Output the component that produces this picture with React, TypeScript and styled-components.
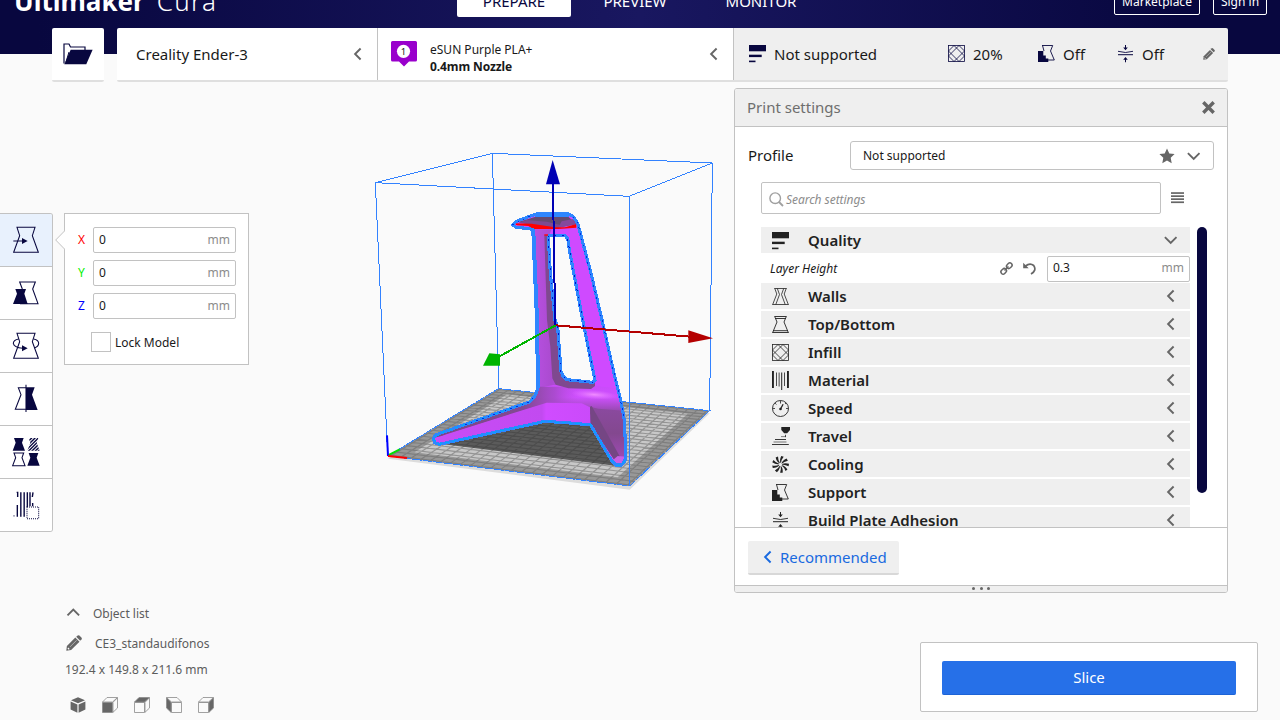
import React from 'react';
import styled, { createGlobalStyle } from 'styled-components';

const NAVY = '#08073f';
const LINE = '#c2c2c2';
const INK = '#191919';
const GREY = '#666666';

const GlobalStyle = createGlobalStyle`
  * { box-sizing: border-box; }
  body {
    margin: 0;
    background: #fafafa;
    font-family: "Noto Sans", "Open Sans", sans-serif;
    color: ${INK};
    overflow: hidden;
  }
`;

/* ---------- layout ---------- */

const Window = styled.div`
  display: flex;
  flex-direction: column;
  width: 1280px;
  height: 720px;
  overflow: hidden;
  background: #fafafa;
`;

const Header = styled.header`
  display: grid;
  grid-template-columns: 457px 1fr auto;
  align-items: start;
  height: 54px;
  flex: none;
  overflow: hidden;
  padding-right: 13px;
  background: linear-gradient(90deg, ${NAVY} 0%, ${NAVY} 3%, #191760 50%, ${NAVY} 92%, ${NAVY} 100%);
`;

const Logo = styled.div`
  margin: -14px 0 0 14px;
  line-height: 30px;
  font-size: 26px;
  font-weight: 700;
  color: #fff;
  white-space: nowrap;
`;

const LogoLight = styled.span`
  font-weight: 300;
  margin-left: 4px;
  letter-spacing: 1.3px;
`;

const Tabs = styled.nav`
  display: flex;
  gap: 13px;
  margin-top: -13px;
`;

const Tab = styled.div<{ $active?: boolean; $width: number }>`
  width: ${(p) => p.$width}px;
  height: 30px;
  line-height: 28px;
  text-align: center;
  font-size: 15px;
  border-radius: 2px;
  color: ${(p) => (p.$active ? NAVY : '#fff')};
  background: ${(p) => (p.$active ? '#fff' : 'transparent')};
`;

const HeaderButtons = styled.div`
  display: flex;
  gap: 13px;
  margin-top: -12px;
`;

const HeaderButton = styled.div<{ $width: number }>`
  width: ${(p) => p.$width}px;
  height: 27px;
  line-height: 26px;
  border: 1px solid #fff;
  border-radius: 2px;
  font-size: 12px;
  text-align: center;
  color: #fff;
`;

const StageMenu = styled.div`
  display: flex;
  flex: none;
  height: 54px;
  margin: -26px 52px 0;
  z-index: 1;
`;

const OpenFile = styled.div`
  display: flex;
  align-items: center;
  justify-content: center;
  width: 52px;
  margin-right: 13px;
  background: #fff;
  border-bottom: 2px solid #dfdfdf;
  border-radius: 2px;
`;

const StageCell = styled.div<{ $width: number; $muted?: boolean; $pad: number; $first?: boolean }>`
  display: flex;
  align-items: center;
  width: ${(p) => p.$width}px;
  padding: 0 ${(p) => (p.$muted ? 13 : 12)}px 0 ${(p) => p.$pad}px;
  background: ${(p) => (p.$muted ? '#efefef' : '#fff')};
  border-bottom: 2px solid #dfdfdf;
  box-shadow: ${(p) => (p.$first ? 'none' : `inset 1px 0 0 ${LINE}`)};
  border-radius: ${(p) => (p.$first ? '2px 0 0 2px' : p.$muted ? '0 2px 2px 0' : '0')};
  font-size: 15px;
`;

const Grow = styled.div`
  flex: 1;
`;

const MaterialText = styled.div`
  flex: 1;
  margin-left: 13px;
  font-size: 12px;
  line-height: 17px;
  padding-top: 8px;
`;

const Strong = styled.div`
  font-weight: 700;
  letter-spacing: -0.1px;
`;

const Summary = styled.div<{ $width: number; $gap: number }>`
  display: flex;
  align-items: center;
  gap: ${(p) => p.$gap}px;
  width: ${(p) => p.$width}px;
  font-size: 15px;
`;

const Body = styled.main`
  display: grid;
  flex: 1;
  min-height: 0;
`;

const SceneLayer = styled.div`
  grid-area: 1 / 1;
  padding: 58px 0 0 365px;
  height: 0;
`;

const Overlay = styled.div`
  grid-area: 1 / 1;
  display: flex;
  flex-direction: column;
  z-index: 1;
`;

const UpperRow = styled.div`
  display: flex;
  align-items: flex-start;
  height: 511px;
  padding-right: 52px;
`;

const LowerRow = styled.div`
  display: flex;
  flex: 1;
  justify-content: space-between;
`;

/* ---------- tools ---------- */

const Toolbar = styled.div`
  width: 53px;
  margin-top: 131px;
  border: 1px solid ${LINE};
  border-left: 0;
  border-radius: 0 3px 3px 0;
  overflow: hidden;
  background: #fff;
`;

const ToolButton = styled.div<{ $active?: boolean }>`
  height: 53px;
  background: ${(p) => (p.$active ? '#e8f1fd' : '#fff')};
  border-bottom: 1px solid ${LINE};
  &:last-child { height: 52px; border-bottom: 0; }
  svg { display: block; }
`;

const ToolPointer = styled.svg`
  margin: 148px -1px 0 2px;
  flex: none;
  z-index: 1;
`;

const ToolPanel = styled.div`
  width: 185px;
  height: 152px;
  margin-top: 131px;
  padding: 13px 12px 0 12px;
  background: #fff;
  border: 1px solid ${LINE};
`;

const AxisRow = styled.label`
  display: flex;
  align-items: center;
  margin-bottom: 7px;
`;

const AxisName = styled.span<{ $color: string }>`
  width: 16px;
  padding: 0 0 2px 1px;
  font-size: 12px;
  text-align: left;
  color: ${(p) => p.$color};
`;

const Field = styled.div<{ $width: number }>`
  display: flex;
  align-items: center;
  justify-content: space-between;
  width: ${(p) => p.$width}px;
  height: 26px;
  padding: 0 5px 2px;
  border: 1px solid ${LINE};
  border-radius: 2px;
  background: #fff;
  font-size: 12px;
`;

const Unit = styled.span`
  color: #8c8c8c;
`;

const LockRow = styled.div`
  display: flex;
  align-items: center;
  gap: 4px;
  margin: 13px 0 0 14px;
  font-size: 12px;
`;

const Checkbox = styled.div`
  width: 20px;
  height: 20px;
  border: 1px solid ${LINE};
  background: #fff;
`;

/* ---------- settings panel ---------- */

const Settings = styled.section`
  display: flex;
  flex-direction: column;
  width: 494px;
  height: 505px;
  margin: 6px 0 0 auto;
  background: #fff;
  border: 1px solid ${LINE};
  border-radius: 3px;
  overflow: hidden;
`;

const SettingsTitle = styled.div`
  display: flex;
  align-items: center;
  justify-content: space-between;
  height: 38px;
  padding: 0 11px 1px 12px;
  background: #efefef;
  border-bottom: 1px solid ${LINE};
  font-size: 15px;
  color: #6e6e6e;
`;

const ProfileRow = styled.div`
  display: flex;
  align-items: center;
  justify-content: space-between;
  margin-top: 14px;
  padding: 0 13px;
  font-size: 15px;
`;

const ProfileLabel = styled.span`
  padding-bottom: 2px;
`;

const Combo = styled.div`
  display: flex;
  align-items: center;
  gap: 12px;
  width: 364px;
  height: 29px;
  padding: 0 12px 0 12px;
  border: 1px solid ${LINE};
  border-radius: 3px;
  font-size: 12px;
`;

const SearchRow = styled.div`
  display: flex;
  align-items: center;
  gap: 10px;
  margin: 12px 0 13px 26px;
`;

const SearchBox = styled.div`
  display: flex;
  align-items: center;
  gap: 2px;
  width: 400px;
  height: 32px;
  padding: 2px 0 0 7px;
  border: 1px solid ${LINE};
  border-radius: 2px;
  font-size: 12px;
  font-style: italic;
  letter-spacing: -0.05px;
  color: #8c8c8c;
`;

const ListArea = styled.div`
  display: flex;
  gap: 7px;
  flex: 1;
  min-height: 0;
  padding-left: 26px;
  overflow: hidden;
`;

const List = styled.div`
  width: 429px;
`;

const ScrollThumb = styled.div`
  width: 10px;
  height: 266px;
  border-radius: 5px;
  background: ${NAVY};
`;

const Category = styled.div`
  display: flex;
  align-items: center;
  height: 26px;
  margin-bottom: 2px;
  padding: 0 12px 0 11px;
  background: #efefef;
  font-size: 15px;
  font-weight: 600;
  color: #222;
  & > svg:first-child { margin-top: 2px; }
`;

const CategoryName = styled.span`
  flex: 1;
  margin-left: 18px;
`;

const SettingRow = styled.div`
  display: flex;
  align-items: center;
  height: 28px;
  padding: 0 0 1px 9px;
  font-size: 12px;
  font-style: italic;
  & > svg { margin-right: 10px; }
  & > svg + svg { margin-right: 11px; }
`;

const Upright = styled.span`
  font-style: normal;
`;

const SettingsFooter = styled.div`
  height: 58px;
  padding: 13px;
  border-top: 1px solid ${LINE};
`;

const Recommended = styled.div`
  display: flex;
  align-items: center;
  gap: 5px;
  width: 151px;
  height: 34px;
  padding-left: 13px;
  border-bottom: 2px solid #d8d8d8;
  border-radius: 2px;
  background: #efefef;
  font-size: 15px;
  color: #196ae0;
`;

const DragHandle = styled.div`
  display: flex;
  align-items: flex-start;
  justify-content: center;
  gap: 4.5px;
  height: 7px;
  padding-top: 1px;
  border-top: 1px solid ${LINE};
  background: #efefef;
`;

const Dot = styled.i`
  width: 3px;
  height: 3px;
  border-radius: 50%;
  background: ${GREY};
`;

/* ---------- lower row ---------- */

const ObjectInfo = styled.div`
  display: flex;
  flex-direction: column;
  padding: 11px 0 0 65px;
  font-size: 12px;
  color: #5c5c5c;
`;

const InfoRow = styled.div<{ $height: number; $gap: number; $indent?: number }>`
  display: flex;
  align-items: center;
  height: ${(p) => p.$height}px;
  gap: ${(p) => p.$gap}px;
  padding-left: ${(p) => p.$indent ?? 0}px;
`;

const Views = styled.div`
  display: flex;
  gap: 16px;
  margin: 23px 0 0 5px;
`;

const ActionPanel = styled.div`
  width: 338px;
  height: 70px;
  margin: 49px 22px 0 0;
  padding: 18px 21px;
  border: 1px solid ${LINE};
  border-radius: 2px;
  background: #fff;
`;

const SliceButton = styled.div`
  height: 34px;
  line-height: 33px;
  border-radius: 2px;
  background: #2670e8;
  border-bottom: 1px solid #1d63d6;
  color: #fff;
  font-size: 15px;
  text-align: center;
`;

/* ---------- icons ---------- */

type ChevronDir = 'left' | 'down' | 'up';
const chevrons: Record<ChevronDir, string> = {
  left: 'M9.600 1.500 L4.100 7 L9.600 12.500',
  down: 'M.900 4.200 L6.700 10 L12.500 4.200',
  up: 'M1.500 9.300 L7.300 3.500 L13.100 9.300',
};

const Chevron = ({ dir, color = GREY }: { dir: ChevronDir; color?: string }) => (
  <svg width="14" height="14" viewBox="0 0 14 14" fill="none" stroke={color} strokeWidth="1.900">
    <path d={chevrons[dir]} />
  </svg>
);

const FolderIcon = () => (
  <svg width="30" height="22" viewBox="0 0 30 22">
    <path d="M1 20.500 V1 H6 L7.500 4 H22 V7.500" fill="none" stroke={NAVY} strokeWidth="1.200" />
    <path d="M3 19 L6 9" fill="none" stroke={NAVY} strokeWidth="1" />
    <path d="M7.700 6.700 H29.600 L23.300 21.300 H1.300 Z" fill={NAVY} />
  </svg>
);

const MaterialBadge = () => (
  <svg width="26" height="26" viewBox="0 0 26 26">
    <path d="M1.500 0 H24.500 Q26 0 26 1.500 V19 Q26 20.500 24.500 20.500 H18 L13 25.500 L8 20.500 H1.500 Q0 20.500 0 19 V1.500 Q0 0 1.500 0Z" fill="#9900cc" />
    <circle cx="12.500" cy="10.300" r="6.600" fill="#fff" />
    <text x="12.500" y="13.800" fontSize="9.500" textAnchor="middle" fill={INK}>1</text>
  </svg>
);

type GlyphName =
  | 'quality' | 'walls' | 'topbottom' | 'infill' | 'material'
  | 'speed' | 'travel' | 'cooling' | 'support' | 'adhesion';

const glyphs: Record<GlyphName, (c: string) => React.ReactNode> = {
  quality: (c) => (
    <g fill={c}>
      <rect x="0" y="0" width="17" height="6.300" />
      <rect x="0" y="9.700" width="12.700" height="2.400" />
      <rect x="0" y="15.600" width="6.500" height="1.600" />
    </g>
  ),
  walls: (c) => (
    <g fill="none" stroke={c} strokeWidth=".8">
      <path d="M2.300 .500 H14.700 M.300 16.500 H16.700" />
      <path d="M2.800 .500 L4.800 6 L.700 16.500 M5.300 .500 L7.500 6.500 L3.800 16.500 M14.200 .500 L12.200 6 L16.300 16.500 M11.700 .500 L9.500 6.500 L13.200 16.500" />
    </g>
  ),
  topbottom: (c) => (
    <g fill="none" stroke={c} strokeWidth=".9">
      <path d="M2.500 .500 H14.500 M3 2.500 H14 M1 14.700 H16 M.300 16.500 H16.700" />
      <path d="M2.700 .500 L5 6 L.700 16.500 M14.300 .500 L12 6 L16.300 16.500" />
    </g>
  ),
  infill: (c) => (
    <g fill="none" stroke={c} strokeWidth=".8">
      <rect x=".500" y=".500" width="16" height="16" />
      <path d="M.500 6 L6 .500 M.500 11 L11 .500 M6 16.500 L16.500 6 M11 16.500 L16.500 11 M.500 6 L11 16.500 M.500 11 L6 16.500 M6 .500 L16.500 11 M11 .500 L16.500 6" />
    </g>
  ),
  material: (c) => (
    <g fill={c}>
      <rect x="0" y="-1" width="1.900" height="17" />
      <rect x="15" y="-1" width="1.900" height="17" />
      <rect x="4" y=".500" width=".8" height="13.500" />
      <rect x="6.700" y=".500" width=".8" height="14" />
      <rect x="9.200" y=".500" width="1" height="17.500" />
      <rect x="12" y=".500" width=".8" height="13.500" />
    </g>
  ),
  speed: (c) => (
    <g fill="none" stroke={c} strokeWidth=".9">
      <circle cx="8.500" cy="8.500" r="8" />
      <path d="M8.500 .500 V3.500 M.500 8.500 H3 M14 8.500 H16.500 M2.900 3 L4.500 4.500 M14.100 3 L13 4" strokeWidth=".8" />
      <circle cx="8.500" cy="9" r="1.300" fill={c} stroke="none" />
      <path d="M8.500 9 L11.100 4.300" strokeWidth="1.300" />
    </g>
  ),
  travel: (c) => (
    <g fill={c}>
      <path d="M9.300 -1 H18 V2 L15.200 5.300 H12.200 L9.300 2Z" />
      <rect x="9" y="8.200" width="5" height=".9" opacity=".6" />
      <rect x="13" y="6.800" width="1" height="2.300" opacity=".8" />
      <rect x="3" y="11" width="11" height=".9" />
      <rect x="1.500" y="13.500" width="13" height="1" opacity=".6" />
      <rect x="0" y="16" width="16.800" height=".9" />
    </g>
  ),
  cooling: (c) => (
    <g fill={c}>
      {[0, 1, 2, 3, 4, 5, 6, 7, 8].map((i) => (
        <path key={i} transform={`rotate(${i * 40 + 10} 8.500 8.500)`} d="M8.300 7 Q6.500 4.500 7.800 0 L10.300 .400 Q8.300 4 8.700 7Z" />
      ))}
    </g>
  ),
  support: (c) => (
    <g>
      <path d="M4 .500 H14.700 L12.500 6 L16.300 15 H10 M4.500 .500 L6 6" fill="none" stroke={c} strokeWidth=".9" />
      <path d="M0 6 H5.300 V10.500 H7.800 V13.500 H10.300 V17 H0Z" fill={c} />
    </g>
  ),
  adhesion: (c) => (
    <g fill={c} stroke={c} strokeWidth="0">
      <path d="M1 6.300 Q8.500 8.700 16 6.300" fill="none" strokeWidth=".9" />
      <rect x="1" y="9.200" width="15" height="1" />
      <path d="M8 0 H9 V2.500 H10.800 L8.500 5.300 L6.200 2.500 H8Z" />
      <path d="M8 17.200 H9 V14.700 H10.800 L8.500 11.900 L6.200 14.700 H8Z" />
    </g>
  ),
};

const Glyph = ({ name, color = '#222' }: { name: GlyphName; color?: string }) => (
  <svg width="18" height="18" viewBox="0 0 18 18" overflow="visible">{glyphs[name](color)}</svg>
);

const Pencil = ({ size }: { size: number }) => (
  <svg width={size} height={size} viewBox="0 0 16 16" fill={GREY}>
    <path d="M.3 15.700 L.9 10.900 L9.300 2.500 L13.500 6.700 L5.100 15.100 Z" />
    <path d="M10.200 1.700 L11.700 .4 Q12.500 -.2 13.400 .6 L15.400 2.600 Q16.200 3.500 15.600 4.300 L14.200 5.700 Z" />
    <path d="M4 11.900 L10.600 5.300" stroke="#ddd" strokeWidth=".6" />
    <path d="M1.900 13 L3.200 14.300" stroke="#fff" strokeWidth="1.200" />
  </svg>
);

const CloseIcon = () => (
  <svg width="14" height="13" viewBox="0 0 14 13" stroke={GREY} strokeWidth="3.400">
    <path d="M1.300 1.300 L11.700 11.700 M11.700 1.300 L1.300 11.700" />
  </svg>
);

const Star = () => (
  <svg width="16" height="16" viewBox="0 0 16 15" fill={GREY}>
    <path d="M8 .1 L10.300 4.900 L15.600 5.500 L11.700 9.200 L12.700 14.700 L8 12.100 L3.300 14.700 L4.300 9.200 L.4 5.500 L5.700 4.900 Z" />
  </svg>
);

const SearchIcon = () => (
  <svg width="15" height="15" viewBox="0 0 15 15" fill="none" stroke="#a0a0a0">
    <circle cx="6.200" cy="6.200" r="5.300" strokeWidth="1.400" />
    <path d="M10 10 L14 14" strokeWidth="1.800" />
  </svg>
);

const Hamburger = () => (
  <svg width="13" height="12" viewBox="0 0 13 12" fill={GREY}>
    <rect width="13" height="1.700" y=".2" />
    <rect width="13" height="1.700" y="3.300" />
    <rect width="13" height="1.700" y="6.300" />
    <rect width="13" height="1.700" y="9.400" />
  </svg>
);

const LinkIcon = () => (
  <svg width="13" height="13" viewBox="0 0 13 13" fill="none" stroke={GREY} strokeWidth="1.500">
    <rect x="-3" y="-2.200" width="6" height="4.400" rx="2.200" transform="translate(3.700 9.300) rotate(-45)" />
    <rect x="-3" y="-2.200" width="6" height="4.400" rx="2.200" transform="translate(9.300 3.700) rotate(-45)" />
    <path d="M4.500 8.500 L8.500 4.500" />
  </svg>
);

const ResetIcon = () => (
  <svg width="13" height="13" viewBox="0 0 13 13">
    <path d="M2.500 4 Q7 .300 10.700 3.500 Q14 8.500 8 12" fill="none" stroke={GREY} strokeWidth="1.700" />
    <path d="M.2 .800 V6.300 H5.700Z" fill={GREY} />
  </svg>
);

type ToolName = 'move' | 'scale' | 'rotate' | 'mirror' | 'perModel' | 'blocker';

const TOOL_BODY = 'M51 40 H105 L97 65 L115 115 H41 L59 65 Z';
const MINI = 'M4 0 H33 L28 14 L37 38 H0 L9 14 Z';

const toolShapes: Record<ToolName, React.ReactNode> = {
  move: (
    <>
      <path d={TOOL_BODY} />
      <path d="M40 81 H68" />
      <path d="M66 72 L83 81 L66 90Z" fill={NAVY} stroke="none" />
    </>
  ),
  scale: (
    <>
      <path d="M67 66 L59 45 H106 L98 66 L114 110 H60" />
      <path d="M46 66 H78 L73 80 L83 111 H39 L51 80Z" fill={NAVY} stroke="none" />
    </>
  ),
  rotate: (
    <>
      <path d={TOOL_BODY} />
      <path d="M56 57 Q40 60 40 70 Q42 82 68 85 M101 57 Q116 60 116 70 Q116 80 103 84" />
      <path d="M66 76 L83 85 L66 94Z" fill={NAVY} stroke="none" />
    </>
  ),
  mirror: (
    <>
      <path d="M78 44 H55 L63 65 L46 109 H78" />
      <path d="M78 43 H104 L96 65 L113 111 H78Z" fill={NAVY} stroke="none" />
      <path d="M78 35 V117" />
    </>
  ),
  perModel: (
    <>
      <clipPath id="mini-clip"><path d={MINI} transform="translate(82 36)" /></clipPath>
      <path d={MINI} transform="translate(38 36)" fill={NAVY} stroke="none" />
      <path
        clipPath="url(#mini-clip)"
        d="M76 55 L96 35 M76 65 L106 35 M76 75 L116 35 M85 76 L122 39 M95 76 L122 49 M105 76 L122 59 M114 76 L122 68"
        strokeWidth="4"
      />
      <path d={MINI} transform="translate(38 81)" />
      <path d={MINI} transform="translate(82 81)" fill={NAVY} stroke="none" />
    </>
  ),
  blocker: (
    <>
      <path d="M50 40 L53 40 V54 M52 78 V113 M62.500 40 V113 M72.500 40 V113 M82 40 V84 M90 40 V82 M99 40 L97 54 M98 72 V82" strokeWidth="4.200" />
      <path d="M42 108 V113" strokeWidth="2" />
      <rect x="81" y="84" width="35" height="35" strokeDasharray="3 3" />
    </>
  ),
};

const tools: ToolName[] = ['move', 'scale', 'rotate', 'mirror', 'perModel', 'blocker'];

const ToolIcon = ({ name }: { name: ToolName }) => (
  <svg width="52" height="52" viewBox="0 0 156 156" fill="none" stroke={NAVY} strokeWidth="3.200">
    {toolShapes[name]}
  </svg>
);

type ViewFace = 'all' | 'front' | 'top' | 'left' | 'right';

const ViewIcon = ({ face }: { face: ViewFace }) => {
  if (face === 'all') {
    return (
      <svg width="16" height="16" viewBox="0 0 16 16" fill={GREY}>
        <path d="M8 .3 L15 3.300 L8 6.300 L1 3.300Z M.6 4.600 L7.400 7.500 V15.800 L.6 12.500Z M15.400 4.600 L8.600 7.500 V15.800 L15.400 12.500Z" />
      </svg>
    );
  }
  const mirrored = face === 'left';
  const fill = (f: ViewFace) => (face === f || (mirrored && f === 'right') ? GREY : 'none');
  return (
    <svg width="16" height="16" viewBox="0 0 16 16" stroke="#8a8a8a" strokeWidth=".8" strokeLinejoin="round">
      <g transform={mirrored ? 'matrix(-1 0 0 1 16 0)' : undefined}>
        <path d="M.5 5.500 H10.500 V15.500 H.5Z" fill={fill('front')} />
        <path d="M.5 5 L5 .5 H15.500 L10.500 5Z" fill={fill('top')} />
        <path d="M11 5.300 L15.500 .8 V11 L11 15.300Z" fill={fill('right')} />
      </g>
    </svg>
  );
};

/* ---------- 3D scene ---------- */

type Pt = [number, number];

// Build plate corners: left, back, right, front.
const L: Pt = [69, 948];
const B: Pt = [400, 746];
const R: Pt = [1034, 812];
const F: Pt = [794, 1038];

// Projects plate coordinates (u along left-to-front, v along left-to-back).
const project = (() => {
  const dx1 = F[0] - R[0], dx2 = B[0] - R[0], dx3 = L[0] - F[0] + R[0] - B[0];
  const dy1 = F[1] - R[1], dy2 = B[1] - R[1], dy3 = L[1] - F[1] + R[1] - B[1];
  const det = dx1 * dy2 - dx2 * dy1;
  const g = (dx3 * dy2 - dx2 * dy3) / det;
  const h = (dx1 * dy3 - dx3 * dy1) / det;
  const a = F[0] - L[0] + g * F[0];
  const b = B[0] - L[0] + h * B[0];
  const d = F[1] - L[1] + g * F[1];
  const e = B[1] - L[1] + h * B[1];
  return (u: number, v: number): Pt => {
    const w = g * u + h * v + 1;
    return [(a * u + b * v + L[0]) / w, (d * u + e * v + L[1]) / w];
  };
})();

const seg = (p: Pt, q: Pt) => `M${p[0].toFixed(1)} ${p[1].toFixed(1)}L${q[0].toFixed(1)} ${q[1].toFixed(1)}`;
const CELLS = 23.5;
const ticks = Array.from({ length: 24 }, (_, i) => (i + 0.25) / CELLS);
const gridLines = ticks.map((t) => seg(project(t, 0), project(t, 1)) + seg(project(0, t), project(1, t))).join('');
const poly = (pts: Pt[]) => pts.map((p) => p.join(',')).join(' ');
const inset = 0.075;
const inner: Pt[] = [project(inset, inset), project(inset, 1 - inset), project(1 - inset, 1 - inset), project(1 - inset, inset)];

const OUTER =
  'M443 254 L454 244 L507 224 L517 221 H610 L625 230 L638 250 L648 287 L678 400 L711 540 L730 625 L747 700 L768 785 L778 840 L782 930 L780 962 L770 975 H752 L740 962 L677 855 L630 850 L540 844 L222 913 L209 908 L205 896 L210 886 L230 878 L495 785 L512 765 L519 742 L516 540 L504 268 L452 261 Z';
const HOLE = 'M550 292 L554 286 L600 287 L608 296 L615 340 L653 540 L690 722 L683 727 L605 719 L594 708 L588 695 L578 560 L570 540 L556 400 Z';

const Scene = () => (
  <svg width="360" height="360" viewBox="0 0 1080 1080">
    <defs>
      <linearGradient id="leg" x1="505" x2="640" y1="0" y2="0" gradientUnits="userSpaceOnUse">
        <stop offset="0" stopColor="#b850e2" />
        <stop offset=".4" stopColor="#ab4bd0" />
        <stop offset="1" stopColor="#cf4aff" />
      </linearGradient>
      <linearGradient id="foot" x1="230" x2="560" y1="0" y2="0" gradientUnits="userSpaceOnUse">
        <stop offset="0" stopColor="#7a4886" />
        <stop offset=".75" stopColor="#824a92" />
        <stop offset="1" stopColor="#a94acb" />
      </linearGradient>
      <linearGradient id="face" x1="240" x2="680" y1="0" y2="0" gradientUnits="userSpaceOnUse">
        <stop offset="0" stopColor="#c84cf6" />
        <stop offset=".66" stopColor="#c24af0" />
        <stop offset=".69" stopColor="#d04cff" />
        <stop offset="1" stopColor="#ca4afa" />
      </linearGradient>
      <linearGradient id="rear" x1="0" x2="0" y1="790" y2="970" gradientUnits="userSpaceOnUse">
        <stop offset="0" stopColor="#8c4aa2" />
        <stop offset=".5" stopColor="#83488f" />
        <stop offset="1" stopColor="#a44abc" />
      </linearGradient>
      <linearGradient id="belly" x1="0" x2="0" y1="730" y2="822" gradientUnits="userSpaceOnUse">
        <stop offset="0" stopColor="#c84af8" />
        <stop offset=".45" stopColor="#cf50ff" />
        <stop offset="1" stopColor="#8a489e" />
      </linearGradient>
      <linearGradient id="bellyLeft" x1="500" x2="640" y1="0" y2="0" gradientUnits="userSpaceOnUse">
        <stop offset="0" stopColor="#8c4aa2" />
        <stop offset=".5" stopColor="#a44ac6" stopOpacity=".8" />
        <stop offset="1" stopColor="#b84ae0" stopOpacity="0" />
      </linearGradient>
      <radialGradient id="shine">
        <stop offset="0" stopColor="#f08cff" />
        <stop offset="1" stopColor="#e070ff" stopOpacity="0" />
      </radialGradient>
    </defs>

    <g stroke="#3282ff" strokeWidth="3" fill="none" shapeRendering="crispEdges">
      <path d="M382 40 L401 745 M382 40 L31 128 M382 40 L1042 69 M1042 69 L1034 811" />
    </g>

    <polygon points={poly([[69, 956], [400, 750], [1034, 820], [794, 1049]])} fill="#dcdcdc" />
    <polygon points={poly([L, B, R, F])} fill="#989898" />
    <polygon points={poly(inner)} fill="#c8c8c8" />
    <path d={gridLines} stroke="#6a6a6a" strokeOpacity=".55" strokeWidth="3.500" fill="none" />
    <path d="M230 912 L540 842 L677 853 L750 977 Z" fill="#303030" fillOpacity=".72" />
    <polygon points={poly([L, B, R, F])} fill="none" stroke="#3282ff" strokeWidth="3" shapeRendering="crispEdges" strokeDasharray="28 3" />

    <path d={`${OUTER} ${HOLE}`} fill="#cf4aff" fillRule="evenodd" />
    <path d="M504 268 H560 L550 292 L556 400 L570 540 L578 560 L588 695 L594 708 L605 719 L650 724 L640 770 H515 L520 742 L517 540Z" fill="url(#leg)" />
    <path d="M512 765 L516 745 L565 735 L690 738 L757 745 L768 785 L780 840 L545 800 L480 800Z" fill="url(#belly)" />
    <path d="M516 740 H640 V795 H480 L512 768Z" fill="url(#bellyLeft)" />
    <path d="M538 286 L550 286 L556 400 L570 540 L578 560 L588 695 L596 712 L612 722 L690 726 L690 738 L678 747 L610 745 L572 734 L562 715 L556 620 L546 540Z" fill="#7f498f" />
    <path d="M208 893 L230 876 L495 783 L512 768 L560 786 L545 790 L240 886Z" fill="url(#foot)" />
    <path d="M207 900 L240 884 L545 788 L650 790 L675 802 V853 L630 850 L540 842 L222 911Z" fill="url(#face)" />
    <path d="M675 800 L700 806 L776 812 L781 880 L780 950 L765 950 L752 966 L677 853Z" fill="url(#rear)" />
    <path d="M675 800 L680 798 L765 950 L752 966 L677 853Z" fill="#754684" />
    <path d="M744 960 L758 948 L778 950 L769 972 H752Z" fill="#c860e6" />
    <ellipse cx="688" cy="764" rx="70" ry="14" fill="url(#shine)" transform="rotate(4 688 764)" />
    <path d="M460 246 L512 230 H610 L634 252 L575 264 L500 254Z" fill="#654a70" />
    <path d="M460 248 L485 240 L545 245 L600 258 L570 264 L500 254Z" fill="#7d4a90" />
    <path d="M590 244 L628 236 L636 252 L580 263Z" fill="#85499b" />
    <path d="M448 250 L500 251 L570 262 L600 262 L634 252 L634 263 L580 267 L505 267 L490 258 L455 256Z" fill="#ff0000" />
    <path d="M538 283 H550 V287 H538Z" fill="#ff0000" />

    <g fill="none" strokeLinejoin="round" shapeRendering="crispEdges">
      <path d={`${OUTER} ${HOLE}`} stroke="#2e86ff" strokeWidth="9.500" />
      <path d="M509 224 H612" stroke="#2e86ff" strokeWidth="13" />
      <path d="M505 275 L516 540 L519 742" stroke="#2e86ff" strokeWidth="12" />
      <path d="M780 962 L770 975 H752 L740 962 L677 855 L630 850 L540 844 L222 913 L205 896 L230 878 L495 785" stroke="#00a8ff" strokeWidth="3" strokeDasharray="12 9" />
      <path d="M441 254 L505 224 M625 230 L638 250 L648 287 L711 540 L747 700 L780 840 M300 854 L495 785 L512 765" stroke="#0030e0" strokeWidth="3" strokeDasharray="5 13" />
      <path d={HOLE} stroke="#0010c8" strokeWidth="3" strokeDasharray="5 17" />
    </g>

    <g stroke="#3282ff" strokeWidth="3" fill="none" shapeRendering="crispEdges">
      <path d="M31 128 L792 169 L1042 69 M31 128 L68 948 M792 169 L795 1037" />
    </g>

    <path d="M564 130 L567 350 L571 556" stroke="#0000b4" strokeWidth="6" fill="none" shapeRendering="crispEdges" />
    <path d="M563 60 L585 133 H543Z" fill="#0000b4" />
    <path d="M572 556 L975 590" stroke="#b40000" strokeWidth="6" shapeRendering="crispEdges" />
    <path d="M970 571 L1044 595 L970 609Z" fill="#b40000" />
    <path d="M572 556 L400 651" stroke="#00b400" strokeWidth="6" shapeRendering="crispEdges" />
    <path d="M373 640 L405 643 V677 H354Z" fill="#00b400" />
    <path d="M69 946 L104 928" stroke="#00e000" strokeWidth="6" />
    <path d="M66 886 L69 948" stroke="#0000ff" strokeWidth="6" />
    <path d="M69 948 L126 954" stroke="#ff0000" strokeWidth="6" />
  </svg>
);

/* ---------- data ---------- */

const axes = [
  { name: 'X', color: '#ff0000' },
  { name: 'Y', color: '#00f000' },
  { name: 'Z', color: '#0000ff' },
];

const categories: { name: string; icon: GlyphName }[] = [
  { name: 'Walls', icon: 'walls' },
  { name: 'Top/Bottom', icon: 'topbottom' },
  { name: 'Infill', icon: 'infill' },
  { name: 'Material', icon: 'material' },
  { name: 'Speed', icon: 'speed' },
  { name: 'Travel', icon: 'travel' },
  { name: 'Cooling', icon: 'cooling' },
  { name: 'Support', icon: 'support' },
  { name: 'Build Plate Adhesion', icon: 'adhesion' },
];

const views: ViewFace[] = ['all', 'front', 'top', 'left', 'right'];

const CategoryRow = ({ name, icon, open }: { name: string; icon: GlyphName; open?: boolean }) => (
  <Category>
    <Glyph name={icon} />
    <CategoryName>{name}</CategoryName>
    <Chevron dir={open ? 'down' : 'left'} />
  </Category>
);

export default function App() {
  return (
    <Window>
      <GlobalStyle />
      <Header>
        <Logo>Ultimaker<LogoLight> Cura</LogoLight></Logo>
        <Tabs>
          <Tab $active $width={114}>PREPARE</Tab>
          <Tab $width={102}>PREVIEW</Tab>
          <Tab $width={124}>MONITOR</Tab>
        </Tabs>
        <HeaderButtons>
          <HeaderButton $width={86}>Marketplace</HeaderButton>
          <HeaderButton $width={54}>Sign in</HeaderButton>
        </HeaderButtons>
      </Header>

      <StageMenu>
        <OpenFile><FolderIcon /></OpenFile>
        <StageCell $width={260} $pad={19} $first>
          Creality Ender-3
          <Grow />
          <Chevron dir="left" />
        </StageCell>
        <StageCell $width={356} $pad={14}>
          <MaterialBadge />
          <MaterialText>
            eSUN Purple PLA+
            <Strong>0.4mm Nozzle</Strong>
          </MaterialText>
          <Chevron dir="left" />
        </StageCell>
        <StageCell $width={495} $pad={16} $muted>
          <Summary $width={199} $gap={7}><Glyph name="quality" color={NAVY} />Not supported</Summary>
          <Summary $width={90} $gap={7}><Glyph name="infill" color={NAVY} />20%</Summary>
          <Summary $width={79} $gap={7}><Glyph name="support" color={NAVY} />Off</Summary>
          <Summary $width={60} $gap={7}><Glyph name="adhesion" color={NAVY} />Off</Summary>
          <Grow />
          <Pencil size={12} />
        </StageCell>
      </StageMenu>

      <Body>
        <SceneLayer><Scene /></SceneLayer>
        <Overlay>
          <UpperRow>
            <Toolbar>
              {tools.map((tool, i) => (
                <ToolButton key={tool} $active={i === 0}><ToolIcon name={tool} /></ToolButton>
              ))}
            </Toolbar>
            <ToolPointer width="10" height="20" viewBox="0 0 10 20">
              <path d="M10 .5 L.7 10 L10 19.500" fill="#fff" stroke={LINE} />
            </ToolPointer>
            <ToolPanel>
              {axes.map((axis) => (
                <AxisRow key={axis.name}>
                  <AxisName $color={axis.color}>{axis.name}</AxisName>
                  <Field $width={143}>0<Unit>mm</Unit></Field>
                </AxisRow>
              ))}
              <LockRow><Checkbox />Lock Model</LockRow>
            </ToolPanel>

            <Settings>
              <SettingsTitle>Print settings<CloseIcon /></SettingsTitle>
              <ProfileRow>
                <ProfileLabel>Profile</ProfileLabel>
                <Combo>Not supported<Grow /><Star /><Chevron dir="down" /></Combo>
              </ProfileRow>
              <SearchRow>
                <SearchBox><SearchIcon />Search settings</SearchBox>
                <Hamburger />
              </SearchRow>
              <ListArea>
                <List>
                  <CategoryRow name="Quality" icon="quality" open />
                  <SettingRow>
                    Layer Height
                    <Grow />
                    <LinkIcon />
                    <ResetIcon />
                    <Field $width={143}><Upright>0.3</Upright><Unit><Upright>mm</Upright></Unit></Field>
                  </SettingRow>
                  {categories.map((c) => <CategoryRow key={c.name} {...c} />)}
                </List>
                <ScrollThumb />
              </ListArea>
              <SettingsFooter>
                <Recommended><Chevron dir="left" color="#196ae0" />Recommended</Recommended>
              </SettingsFooter>
              <DragHandle><Dot /><Dot /><Dot /></DragHandle>
            </Settings>
          </UpperRow>

          <LowerRow>
            <ObjectInfo>
              <InfoRow $height={18} $gap={13} $indent={1}><Chevron dir="up" />Object list</InfoRow>
              <InfoRow $height={42} $gap={13} $indent={1}><Pencil size={16} />CE3_standaudifonos</InfoRow>
              <InfoRow $height={10} $gap={0}>192.4 x 149.8 x 211.6 mm</InfoRow>
              <Views>{views.map((v) => <ViewIcon key={v} face={v} />)}</Views>
            </ObjectInfo>
            <ActionPanel><SliceButton>Slice</SliceButton></ActionPanel>
          </LowerRow>
        </Overlay>
      </Body>
    </Window>
  );
}
